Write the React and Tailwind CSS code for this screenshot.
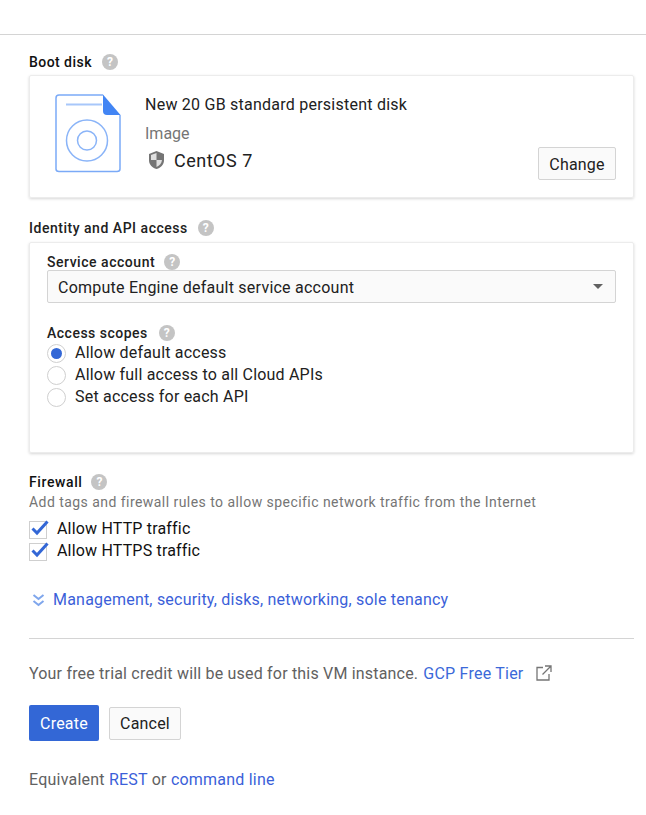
import React from 'react';

const HelpIcon = ({ className = '' }) => (
  <span className={`inline-flex items-center justify-center w-4 h-4 rounded-full bg-[#c4c4c4] text-white text-[12px] font-bold leading-none tracking-normal ${className}`}>?</span>
);

const Radio = ({ checked, label }) => (
  <div className="flex items-center h-[22px]">
    <span className="w-[19px] h-[19px] rounded-full border border-[#cfcfcf] bg-white flex items-center justify-center">
      {checked && <span className="w-[11px] h-[11px] rounded-full bg-[#3367d6]"></span>}
    </span>
    <span className="ml-[9px] text-[16px] tracking-[0.2px] text-[#212121]">{label}</span>
  </div>
);

const Check = ({ label }) => (
  <div className="flex items-center h-[22px]">
    <span className="relative w-[18px] h-[18px] border border-[#cfcfcf] bg-white mt-px">
      <svg className="absolute -top-[3px] left-0" width="20" height="18" viewBox="0 0 20 18">
        <path d="M2.5 9.5 L7 14 L17.5 2.5" fill="none" stroke="#3367d6" strokeWidth="3" />
      </svg>
    </span>
    <span className="ml-[10px] text-[16px] tracking-[0.18px] text-[#111]">{label}</span>
  </div>
);

export default function App() {
  return (
    <div className="w-[646px] h-[815px] bg-white font-['Roboto',sans-serif] overflow-hidden">
      <div className="h-[35px] border-b border-[#d4d4d4]"></div>

      <div className="pl-[29px]">
        <div className="w-[605px]">
          <div className="flex items-center h-[20px] mt-[17px] text-[14px] font-medium tracking-[0.45px] text-[#111]">
            Boot disk <HelpIcon className="ml-[10px]" />
          </div>
          <div className="mt-[3px] h-[123px] rounded-[2px] border border-[#ececec] shadow-[0_1px_3px_rgba(0,0,0,0.16)] flex relative">
            <div className="ml-[25px] mt-[18px]">
              <svg width="68" height="79" viewBox="0 0 68 79">
                <path d="M48 1 H4 Q1 1 1 4 V75 Q1 77.5 4 77.5 H62 Q65 77.5 65 75 V21" fill="none" stroke="#7baaf7" strokeWidth="1.5" />
                <path d="M48 0.5 L65.5 21 H52 Q48 21 48 17 Z" fill="#4285f4" />
                <path d="M11 10.5 H47" stroke="#a8c7fa" strokeWidth="2" />
                <circle cx="32" cy="46.5" r="20.5" fill="none" stroke="#8ab4f8" strokeWidth="1.5" />
                <circle cx="32" cy="46.5" r="9.5" fill="none" stroke="#8ab4f8" strokeWidth="1.5" />
              </svg>
            </div>
            <div className="ml-[22px] flex flex-col">
              <div className="mt-[19px] h-[20px] leading-[20px] text-[16px] tracking-[0.24px] text-[#212121]">New 20 GB standard persistent disk</div>
              <div className="mt-[9px] h-[20px] leading-[20px] text-[16px] text-[#757575]">Image</div>
              <div className="mt-[4px] flex items-center h-[24px]">
                <svg className="ml-[3px]" width="17" height="20" viewBox="0 0 17 20">
                  <path d="M8.5 1 L16 4 V10 C16 14.5 13 17.8 8.5 19 C4 17.8 1 14.5 1 10 V4 Z" fill="#757575" />
                  <path d="M8.5 3 V10 H14 C13.7 13.3 11.6 15.8 8.5 17 V10 H3 V5 Z" fill="#e0e0e0" />
                </svg>
                <span className="ml-[9px] text-[18px] tracking-[0.5px] text-[#212121]">CentOS 7</span>
              </div>
            </div>
            <button className="absolute right-[17px] top-[71px] w-[78px] h-[33px] pt-[2px] rounded-[2px] border border-[#d4d4d4] bg-[#fafafa] text-[16px] tracking-[0.2px] text-[#212121]">Change</button>
          </div>

          <div className="flex items-center h-[20px] mt-[20px] text-[14px] font-medium tracking-[0.52px] text-[#212121]">
            Identity and API access <HelpIcon className="ml-[10px]" />
          </div>
          <div className="mt-[4px] h-[211px] rounded-[2px] border border-[#ececec] shadow-[0_1px_3px_rgba(0,0,0,0.16)] px-[17px]">
            <div className="flex items-center h-[18px] mt-[9px] pt-[2px] text-[14px] font-medium tracking-[0.53px] text-[#212121]">
              Service account <HelpIcon className="ml-[9px]" />
            </div>
            <div className="flex items-center justify-between h-[33px] rounded-[2px] border border-[#d4d4d4] bg-[#fafafa] pl-[10px] pr-[12px] text-[16px] tracking-[0.24px] text-[#212121]">
              <span className="mt-[2px]">Compute Engine default service account</span>
              <span className="w-0 h-0 border-x-[5px] border-x-transparent border-t-[5px] border-t-[#616161]"></span>
            </div>
            <div className="flex items-center h-[20px] mt-[20px] -mb-px text-[14px] font-medium tracking-[0.5px] text-[#212121]">
              Access scopes <HelpIcon className="ml-[11px]" />
            </div>
            <div>
              <Radio checked label="Allow default access" />
              <Radio label="Allow full access to all Cloud APIs" />
              <Radio label="Set access for each API" />
            </div>
          </div>

          <div className="flex items-center h-[20px] mt-[19px] text-[14px] font-medium tracking-[0.6px] text-[#111]">
            Firewall <HelpIcon className="ml-[9px]" />
          </div>
          <div className="h-[20px] leading-[20px] text-[14px] tracking-[0.45px] text-[#757575]">Add tags and firewall rules to allow specific network traffic from the Internet</div>
          <div className="mt-[6px]">
            <Check label="Allow HTTP traffic" />
            <Check label="Allow HTTPS traffic" />
          </div>

          <div className="flex items-center h-[20px] mt-[28px] text-[16px] tracking-[0.21px] text-[#3b5fd9]">
            <svg className="ml-[3px]" width="13" height="14" viewBox="0 0 13 14">
              <path d="M1.5 2 L6.5 6 L11.5 2 M1.5 8 L6.5 12 L11.5 8" fill="none" stroke="#7fa6ec" strokeWidth="2" />
            </svg>
            <span className="ml-[8px]">Management, security, disks, networking, sole tenancy</span>
          </div>

          <div className="mt-[28px] border-t border-[#d4d4d4]"></div>

          <div className="flex items-center h-[20px] mt-[25px] text-[16px] tracking-[0.19px] text-[#616161]">
            Your free trial credit will be used for this VM instance.
            <span className="ml-[5px] text-[#3b69d9] tracking-[0.23px]">GCP Free Tier</span>
            <svg className="ml-[12px] -mt-[3px]" width="16" height="16" viewBox="0 0 16 16">
              <path d="M7 2.5 H1 V15 H13 V9 M9 1 H15 V7 M15 1 L6.5 9.5" fill="none" stroke="#757575" strokeWidth="1.3" />
            </svg>
          </div>

          <div className="flex items-center mt-[21px]">
            <button className="w-[70px] h-[36px] pt-px rounded-[2px] bg-[#3367d6] text-white text-[16px] tracking-[0.2px]">Create</button>
            <button className="ml-[10px] w-[72px] h-[33px] pt-[2px] rounded-[2px] border border-[#d4d4d4] bg-[#fafafa] text-[16px] tracking-[0.2px] text-[#212121]">Cancel</button>
          </div>

          <div className="h-[20px] leading-[20px] mt-[29px] text-[16px] tracking-[0.22px] text-[#616161]">
            Equivalent <span className="text-[#3b5fd9]">REST</span> or <span className="text-[#3b5fd9]">command line</span>
          </div>
        </div>
      </div>
    </div>
  );
}
